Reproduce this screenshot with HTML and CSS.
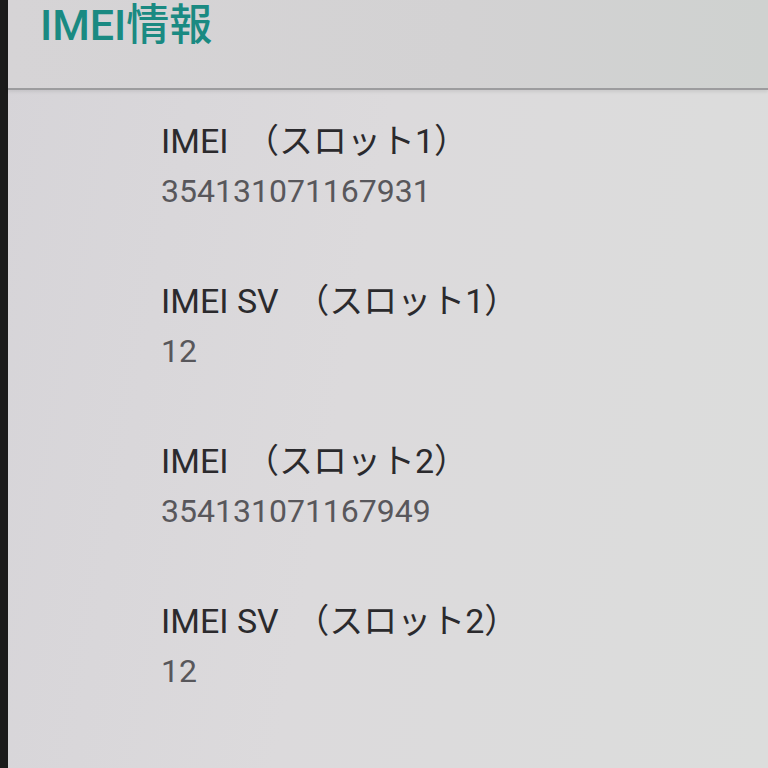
FILE: index.html
```html
<!DOCTYPE html>
<html lang="ja">
<head>
<meta charset="utf-8">
<link rel="stylesheet" href="styles.css">
</head>
<body>
<div class="screen">
  <div class="bezel"></div>
  <div class="app">
    <header class="appbar">
      <h1 class="title">IMEI情報</h1>
    </header>
    <main class="list">
      <div class="item">
        <div class="label">IMEI <span class="slot">（スロット1）</span></div>
        <div class="value">354131071167931</div>
      </div>
      <div class="item">
        <div class="label">IMEI SV <span class="slot">（スロット1）</span></div>
        <div class="value">12</div>
      </div>
      <div class="item">
        <div class="label">IMEI <span class="slot">（スロット2）</span></div>
        <div class="value">354131071167949</div>
      </div>
      <div class="item">
        <div class="label">IMEI SV <span class="slot">（スロット2）</span></div>
        <div class="value">12</div>
      </div>
    </main>
  </div>
</div>
</body>
</html>
```

FILE: styles.css
```css
html, body {
  margin: 0;
  padding: 0;
  width: 768px;
  height: 768px;
  overflow: hidden;
  background: #d8d6d9;
}

.screen {
  display: flex;
  width: 768px;
  height: 768px;
}

.bezel {
  width: 8px;
  flex: none;
  background: #1b1b1b;
}

.app {
  flex: 1;
  display: flex;
  flex-direction: column;
  background: linear-gradient(100deg, #d6d4d8 0%, #dcdadc 45%, #dcdddc 100%);
}

.appbar {
  height: 90px;
  flex: none;
  box-sizing: border-box;
  padding-left: 32px;
  border-bottom: 2px solid #9c9c9e;
  background: linear-gradient(90deg, #d6d4d6 0%, #d3d2d3 60%, #cfd2d0 100%);
  box-shadow: 0 2px 3px rgba(0, 0, 0, 0.08);
}

.title {
  margin: 0;
  padding-top: 3px;
  font-family: Roboto, "Noto Sans CJK JP", sans-serif;
  font-weight: 500;
  font-size: 43px;
  line-height: 44px;
  color: #1a8a82;
}

.list {
  display: flex;
  flex-direction: column;
  padding: 29px 0 0 153px;
  gap: 66px;
}

.item {
  display: flex;
  flex-direction: column;
  gap: 6px;
}

.label {
  font-family: Roboto, "Noto Sans CJK JP", sans-serif;
  font-size: 34px;
  line-height: 44px;
  color: #2b2a2d;
}

.slot {
  margin-left: 8px;
}

.value {
  font-family: Roboto, "Noto Sans CJK JP", sans-serif;
  font-size: 32px;
  line-height: 44px;
  color: #58575b;
}
```
